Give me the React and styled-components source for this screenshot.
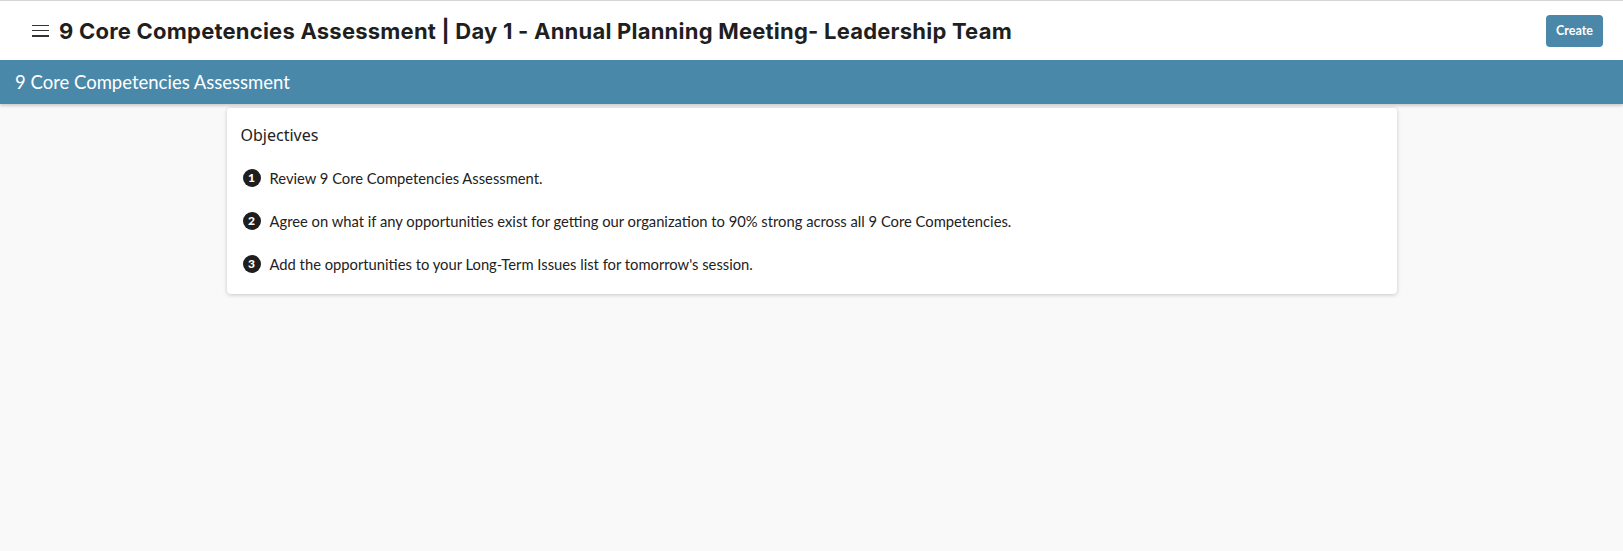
import React from "react";
import styled, { createGlobalStyle } from "styled-components";

const GlobalStyle = createGlobalStyle`
  html, body {
    margin: 0;
    padding: 0;
    background: #f9f9f9;
  }
  body {
    font-family: "Lato", "Noto Sans", sans-serif;
    color: #212121;
  }
`;

const Page = styled.div`
  min-height: 551px;
  background: #f9f9f9;
  border-top: 1px solid #d6d6d6;
`;

const TopBar = styled.header`
  height: 59px;
  background: #ffffff;
  display: flex;
  align-items: center;
  padding: 0 20px 0 32px;
  box-sizing: border-box;
`;

const MenuButton = styled.button`
  width: 17px;
  height: 12px;
  padding: 0;
  margin-right: 10px;
  border: 0;
  background: none;
  display: flex;
  flex-direction: column;
  justify-content: space-between;
  cursor: pointer;
  span {
    display: block;
    height: 1.5px;
    background: #333;
  }
`;

const Title = styled.h1`
  margin: 0;
  flex: 1;
  font-family: "Inter", "Noto Sans", sans-serif;
  font-weight: 700;
  font-size: 22px;
  letter-spacing: 0.22px;
  color: #1f1f1f;
  white-space: nowrap;
`;

const CreateButton = styled.button`
  height: 32px;
  padding: 0 10px;
  border: 0;
  border-radius: 4px;
  background: #4a87a8;
  color: #ffffff;
  font-family: "Lato", sans-serif;
  font-weight: 700;
  font-size: 12.5px;
  cursor: pointer;
`;

const SectionBar = styled.div`
  height: 44px;
  background: #4a88aa;
  color: #ffffff;
  display: flex;
  align-items: center;
  padding: 0 15px;
  font-size: 18.5px;
  box-shadow: 0 2px 3px rgba(0, 0, 0, 0.18);
`;

const Card = styled.section`
  width: 1170px;
  margin: 4px auto 0;
  background: #ffffff;
  border-radius: 4px;
  box-shadow: 0 1px 4px rgba(0, 0, 0, 0.2);
  padding: 16px 14px 9px;
  box-sizing: border-box;
`;

const CardTitle = styled.h2`
  margin: 0 0 10px;
  font-family: "Noto Sans", "Lato", sans-serif;
  font-weight: 400;
  font-size: 16px;
  color: #222;
`;

const List = styled.ol`
  margin: 0;
  padding: 0;
  list-style: none;
`;

const Item = styled.li`
  height: 43px;
  display: flex;
  align-items: center;
  font-size: 14.75px;
  color: #222;
`;

const Num = styled.span`
  width: 18px;
  height: 18px;
  border-radius: 50%;
  background: #1e1e1e;
  color: #fff;
  font-size: 12px;
  font-weight: 900;
  display: inline-flex;
  align-items: center;
  justify-content: center;
  margin: 0 9px 0 2px;
  flex-shrink: 0;
`;

const objectives = [
  "Review 9 Core Competencies Assessment.",
  "Agree on what if any opportunities exist for getting our organization to 90% strong across all 9 Core Competencies.",
  "Add the opportunities to your Long-Term Issues list for tomorrow's session.",
];

export default function App() {
  return (
    <>
      <GlobalStyle />
      <Page>
        <TopBar>
          <MenuButton aria-label="menu">
            <span />
            <span />
            <span />
          </MenuButton>
          <Title>9 Core Competencies Assessment | Day 1 - Annual Planning Meeting- Leadership Team</Title>
          <CreateButton>Create</CreateButton>
        </TopBar>
        <SectionBar>9 Core Competencies Assessment</SectionBar>
        <Card>
          <CardTitle>Objectives</CardTitle>
          <List>
            {objectives.map((o, i) => (
              <Item key={i}>
                <Num>{i + 1}</Num>
                {o}
              </Item>
            ))}
          </List>
        </Card>
      </Page>
    </>
  );
}
